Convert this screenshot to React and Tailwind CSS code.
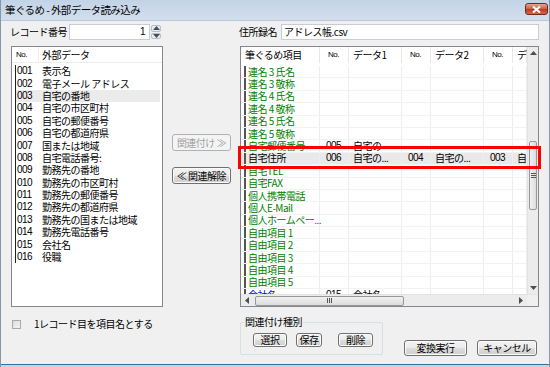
import React from 'react';

const leftItems = [
  ['001', '表示名'],
  ['002', '電子メール アドレス'],
  ['003', '自宅の番地'],
  ['004', '自宅の市区町村'],
  ['005', '自宅の郵便番号'],
  ['006', '自宅の都道府県'],
  ['007', '国または地域'],
  ['008', '自宅電話番号:'],
  ['009', '勤務先の番地'],
  ['010', '勤務先の市区町村'],
  ['011', '勤務先の郵便番号'],
  ['012', '勤務先の都道府県'],
  ['013', '勤務先の国または地域'],
  ['014', '勤務先電話番号'],
  ['015', '会社名'],
  ['016', '役職'],
];

const rightRows = [
  { name: '連名 3 氏名' },
  { name: '連名 3 敬称' },
  { name: '連名 4 氏名' },
  { name: '連名 4 敬称' },
  { name: '連名 5 氏名' },
  { name: '連名 5 敬称' },
  { name: '自宅郵便番号', cells: ['005', '自宅の'] },
  { name: '自宅住所', cells: ['006', '自宅の...', '004', '自宅の...', '003', '自'], selected: true },
  { name: '自宅TEL' },
  { name: '自宅FAX' },
  { name: '個人携帯電話' },
  { name: '個人E-Mail' },
  { name: '個人ホームペー...' },
  { name: '自由項目 1' },
  { name: '自由項目 2' },
  { name: '自由項目 3' },
  { name: '自由項目 4' },
  { name: '自由項目 5' },
  { name: '会社名', cells: ['015', '会社名'], blue: true },
];

// widths of the data columns after the first one
const colW = ['w-[29px]', 'w-[53px]', 'w-[29px]', 'w-[53px]', 'w-[29px]', 'w-[14px]'];

const btn =
  'flex items-center justify-center rounded-[3px] border border-[#707070] bg-[linear-gradient(#f3f3f3_0%,#ebebeb_50%,#dddddd_50%,#cfcfcf_100%)] shadow-[inset_0_0_0_1px_#fbfbfb] text-black';

const Tri = ({ dir }) => {
  const pts = {
    up: '0,4 3.5,0 7,4',
    down: '0,0 3.5,4 7,0',
    left: '4,0 0,3.5 4,7',
    right: '0,0 4,3.5 0,7',
  }[dir];
  const vert = dir === 'up' || dir === 'down';
  return (
    <svg width={vert ? 7 : 4} height={vert ? 4 : 7} viewBox={vert ? '0 0 7 4' : '0 0 4 7'}>
      <polygon points={pts} fill="#4d4d4d" />
    </svg>
  );
};

const LeftList = () => (
  <div className="w-[152px] h-full border border-[#828790] bg-white overflow-hidden">
    <div className="h-[16px] flex items-center border-b border-[#ededed]">
      <div className="w-[27px] pl-[4px] text-[8px] font-['Liberation_Sans',sans-serif] border-r border-[#ececec] h-full flex items-center">No.</div>
      <div className="pl-[3px]">外部データ</div>
    </div>
    <div className="pt-[2px]">
      {leftItems.map(([no, name], i) => (
        <div
          key={no}
          className={`h-[12.4px] leading-[12px] ml-[3px] mr-[2px] flex items-center border-l border-[#222] ${i === 2 ? 'bg-[#ebebeb]' : ''}`}
        >
          <span className="w-[26px] pl-[1px] font-['Liberation_Sans',sans-serif] text-[10px]">{no}</span>
          <span>{name}</span>
        </div>
      ))}
    </div>
  </div>
);

const RightList = () => (
  <div className="w-[299px] h-full border border-[#828790] bg-white flex flex-col overflow-hidden">
    <div className="flex-1 flex min-h-0">
      <div className="flex-1 min-w-0 flex flex-col overflow-hidden">
        <div className="h-[16px] flex items-center shrink-0">
          <div className="w-[79px] h-full pl-[4px] flex items-center border-r border-[#e6e6e6]">筆ぐるめ項目</div>
          {['No.', 'データ1', 'No.', 'データ2', 'No.', 'デ'].map((h, i) => (
            <div
              key={i}
              className={`${colW[i]} h-full flex items-center shrink-0 border-r border-[#e6e6e6] whitespace-nowrap ${
                h === 'No.' ? "pl-[8px] text-[8px] font-['Liberation_Sans',sans-serif]" : 'pl-[4px]'
              }`}
            >
              {h}
            </div>
          ))}
        </div>
        <div className="pt-[3px] flex-1 overflow-hidden">
          {rightRows.map((r) => (
            <div
              key={r.name}
              className={`h-[12.4px] leading-[12px] flex border-b border-[#f2f2f2] ${r.selected ? 'bg-[#e9e9e9]' : ''}`}
            >
              <div className="w-[79px] shrink-0 pl-[3px] border-r border-[#eeeeee] flex">
                <div
                  className={`flex-1 flex items-center pl-[2px] border-l-2 border-[#555] whitespace-nowrap ${
                    r.selected ? 'text-black' : r.blue ? 'text-[#0000ff]' : 'text-[#008000]'
                  }`}
                >
                  {r.name}
                </div>
              </div>
              {colW.map((w, i) => {
                const v = r.cells ? r.cells[i] : '';
                return (
                  <div
                    key={i}
                    className={`${w} shrink-0 flex items-center border-r border-[#eeeeee] whitespace-nowrap ${
                      i % 2 === 0 ? "pl-[6px] font-['Liberation_Sans',sans-serif]" : 'pl-[4px]'
                    }`}
                  >
                    {v}
                  </div>
                );
              })}
            </div>
          ))}
        </div>
      </div>
      {/* vertical scrollbar */}
      <div className="w-[11px] shrink-0 flex flex-col bg-[#ececec] border-l border-[#e3e3e3]">
        <div className="h-[12px] flex items-center justify-center">
          <Tri dir="up" />
        </div>
        <div className="flex-1">
          <div className="mt-[82px] mx-[1px] h-[69px] rounded-[2px] border border-[#979797] bg-[linear-gradient(90deg,#f1f1f1,#dcdcdc)] flex items-center justify-center">
            <div className="w-[5px] flex flex-col gap-[1px]">
              <div className="h-px bg-[#555]" />
              <div className="h-px bg-[#555]" />
              <div className="h-px bg-[#555]" />
            </div>
          </div>
        </div>
        <div className="h-[12px] flex items-center justify-center">
          <Tri dir="down" />
        </div>
      </div>
    </div>
    {/* horizontal scrollbar */}
    <div className="h-[12px] shrink-0 flex border-t border-[#e3e3e3]">
      <div className="flex-1 flex bg-[#ececec] items-center">
        <div className="w-[12px] h-full flex items-center justify-center">
          <Tri dir="left" />
        </div>
        <div className="ml-[2px] w-[149px] h-[10px] rounded-[2px] border border-[#979797] bg-[linear-gradient(#f1f1f1,#dcdcdc)] flex items-center justify-center gap-[1px]">
          <div className="w-px h-[5px] bg-[#555]" />
          <div className="w-px h-[5px] bg-[#555]" />
          <div className="w-px h-[5px] bg-[#555]" />
        </div>
        <div className="flex-1" />
        <div className="w-[12px] h-full flex items-center justify-center">
          <Tri dir="right" />
        </div>
      </div>
      <div className="w-[11px] bg-[#f0f0f0]" />
    </div>
  </div>
);

export default function App() {
  return (
    <div className="relative w-[550px] h-[367px] flex flex-col overflow-hidden bg-[#f0f0f0] border-x border-[#8496ac] font-['Noto_Sans_CJK_JP','Noto_Sans',sans-serif] text-[10px] tracking-[-0.5px] leading-none text-black">
      {/* title bar */}
      <div className="h-[21px] shrink-0 flex items-center pl-[4px] pr-[1px] bg-[linear-gradient(#c3d3e7,#d2deed)] border-b border-[#b8c6d6]">
        <span className="text-[10.5px] tracking-[-0.6px] whitespace-pre">筆ぐるめ - 外部データ読み込み</span>
        <div className="ml-auto w-[23px] h-[12px] mb-[2px] rounded-[3px] border border-[#6e2a1c] bg-[linear-gradient(#e8a593,#cf5a41_50%,#b63b1f_51%,#d8664a)] flex items-center justify-center">
          <svg width="9" height="7" viewBox="0 0 9 7">
            <path d="M1 0.5 L8 6.5 M8 0.5 L1 6.5" stroke="#fff" strokeWidth="2" />
          </svg>
        </div>
      </div>

      {/* top inputs */}
      <div className="mt-[3px] h-[16px] flex items-center shrink-0">
        <span className="ml-[9px] w-[59px]">レコード番号</span>
        <div className="w-[81px] h-[16px] border border-[#c9ccd3] bg-white flex items-center justify-end pr-[4px] font-['Liberation_Sans',sans-serif]">
          1
        </div>
        <div className="ml-[1px] w-[10px] h-[14px] flex flex-col gap-px">
          <div className="flex-1 rounded-[2px] border border-[#b3bfcf] bg-[#e6edf5] flex items-center justify-center">
            <Tri dir="up" />
          </div>
          <div className="flex-1 rounded-[2px] border border-[#b3bfcf] bg-[#e6edf5] flex items-center justify-center">
            <Tri dir="down" />
          </div>
        </div>
        <span className="ml-[78px] w-[42px]">住所録名</span>
        <div className="w-[258px] h-[16px] border border-[#c9ccd3] bg-white flex items-center pl-[2px]">
          アドレス帳.csv
        </div>
      </div>

      {/* lists */}
      <div className="mt-[6px] h-[261px] flex shrink-0">
        <div className="ml-[10px]">
          <LeftList />
        </div>
        <div className="ml-[9px] w-[59px] flex flex-col">
          <div className="mt-[88px] h-[17px] flex items-center justify-center rounded-[3px] border border-[#adb2b5] bg-[#f4f4f4] text-[#a0a0a0]">
            関連付け ≫
          </div>
          <div className={`mt-[16px] h-[17px] ${btn}`}>≪ 関連解除</div>
        </div>
        <div className="ml-[9px]">
          <RightList />
        </div>
      </div>

      {/* bottom */}
      <div className="mt-[11px] flex items-start shrink-0">
        <div className="w-[239px] flex items-center pt-[1px]">
          <div className="ml-[11px] w-[9px] h-[9px] border border-[#a9a9a9] bg-[linear-gradient(135deg,#dcdcdc,#f4f4f4)]" />
          <span className="ml-[13px]">1レコード目を項目名とする</span>
        </div>
        <div className="relative mt-[4px] w-[143px] h-[33px] border border-[#d5dfe5] rounded-[2px]">
          <span className="absolute -top-[6px] left-[3px] px-[1px] bg-[#f0f0f0]">関連付け種別</span>
          <div className="flex pl-[12px] pt-[10px]">
            <div className={`w-[34px] h-[14px] ${btn}`}>選択</div>
            <div className={`ml-[9px] w-[26px] h-[14px] ${btn}`}>保存</div>
            <div className={`ml-[16px] w-[35px] h-[14px] ${btn}`}>削除</div>
          </div>
        </div>
        <div className={`ml-[21px] mt-[22px] w-[63px] h-[16px] ${btn}`}>変換実行</div>
        <div className={`ml-[10px] mt-[22px] w-[60px] h-[16px] ${btn}`}>キャンセル</div>
      </div>

      <div className="mt-auto h-[3px] border-t border-[#3f6f8c] bg-[#c4d6e6]" />

      {/* red highlight annotation */}
      <div className="absolute left-[237px] top-[146px] w-[303px] h-[23px] border-[3px] border-[#ff0000]" />
    </div>
  );
}
